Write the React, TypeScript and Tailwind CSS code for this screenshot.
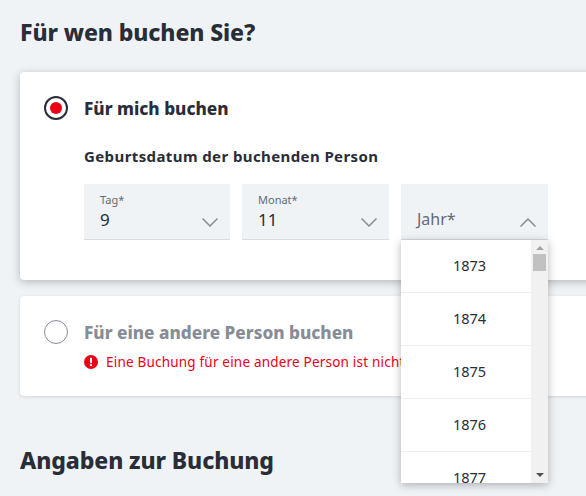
const font = { fontFamily: '"Noto Sans", sans-serif' };

function Chevron({ up }: { up?: boolean }) {
  return (
    <svg width="16" height="9" viewBox="0 0 16 9" fill="none" stroke="#878c96" strokeWidth="1.5" className="shrink-0">
      <path d={up ? "M0.5 8.5 L8 1 L15.5 8.5" : "M0.5 0.5 L8 8 L15.5 0.5"} />
    </svg>
  );
}

function DateField({ label, value, width, chevronRight }: { label: string; value: string; width: string; chevronRight: string }) {
  return (
    <div className={`${width} relative h-[56px] border-b border-[#d7dce1] bg-[#f0f3f5] pl-4 pt-[8px]`}>
      <div className="text-[11px] leading-[16px] text-[#646973]">{label}</div>
      <div className="mt-[1px] text-[17px] leading-[22px] text-[#282d37]">{value}</div>
      <div className={`absolute bottom-[12px] ${chevronRight}`}>
        <Chevron />
      </div>
    </div>
  );
}

function YearList() {
  const years = ["1873", "1874", "1875", "1876", "1877"];
  return (
    <div className="absolute left-0 top-full z-10 mt-[1px] flex h-[243px] w-[147px] overflow-hidden bg-white shadow-[0_2px_8px_rgba(40,45,55,0.35)]">
      <div className="flex-1 overflow-hidden">
        {years.map((y) => (
          <div key={y} className="h-[53px] border-b border-[#f0f0f0] pl-[7px] pt-[12px] text-center text-[14.5px] leading-[26px] text-[#282d37]">
            {y}
          </div>
        ))}
      </div>
      <div className="flex w-[17px] flex-col items-center bg-[#f1f1f1]">
        <div className="mt-[6px] h-0 w-0 border-x-[4px] border-b-[4px] border-x-transparent border-b-[#a3a3a3]" />
        <div className="mt-[4px] h-[17px] w-[13px] bg-[#c1c1c1]" />
        <div className="mt-auto mb-[6px] h-0 w-0 border-x-[4px] border-t-[4px] border-x-transparent border-t-[#505050]" />
      </div>
    </div>
  );
}

export default function App() {
  return (
    <div style={font} className="h-[496px] w-[586px] overflow-hidden bg-[#f0f3f5] pl-5 pt-[16px] text-[#282d37]">
      <h1 className="text-[23px] font-extrabold leading-[32px] tracking-[-0.1px]">Für wen buchen Sie?</h1>

      <div className="relative z-10 mt-[24px] h-[208px] w-[600px] rounded-[4px] bg-white pt-[24px] shadow-[0_2px_8px_rgba(40,45,55,0.3)]">
        <div className="flex h-6 items-center pl-6">
          <div className="flex h-6 w-6 items-center justify-center rounded-full border-2 border-[#282d37]">
            <div className="h-3 w-3 rounded-full bg-[#ec0016]" />
          </div>
          <div className="ml-[16px] mt-[2px] text-[17.2px] font-extrabold leading-6">Für mich buchen</div>
        </div>
        <div className="ml-[64px] mt-[24px]">
          <div className="text-[15px] font-bold leading-[24px] tracking-[0.4px]">Geburtsdatum der buchenden Person</div>
          <div className="mt-[16px] flex gap-3">
            <DateField label="Tag*" value="9" width="w-[146px]" chevronRight="right-[12px]" />
            <DateField label="Monat*" value="11" width="w-[147px]" chevronRight="right-[12px]" />
            <div className="relative h-[56px] w-[147px] border-b border-[#d7dce1] bg-[#f0f3f5] pl-4 pt-[24px]">
              <div className="text-[16px] leading-[22px] text-[#646973]">Jahr*</div>
              <div className="absolute bottom-[12px] right-[12px]">
                <Chevron up />
              </div>
              <YearList />
            </div>
          </div>
        </div>
      </div>

      <div className="mt-4 h-[100px] w-[600px] rounded-[4px] bg-white pl-6 pt-6 shadow-[0_1px_3px_rgba(40,45,55,0.15)]">
        <div className="flex h-6 items-center">
          <div className="h-6 w-6 rounded-full border border-[#878c96]" />
          <div className="ml-[16px] mt-[2px] text-[17.2px] font-extrabold leading-6 text-[#878c96]">Für eine andere Person buchen</div>
        </div>
        <div className="ml-[40px] mt-[8px] flex items-center gap-2">
          <svg width="14" height="14" viewBox="0 0 14 14">
            <circle cx="7" cy="7" r="7" fill="#ec0016" />
            <rect x="6" y="2.8" width="2" height="5.4" rx="0.6" fill="#fff" />
            <circle cx="7" cy="10.2" r="1.1" fill="#fff" />
          </svg>
          <div className="whitespace-nowrap text-[13.5px] leading-5 tracking-[0.2px] text-[#ec0016]">
            Eine Buchung für eine andere Person ist nicht möglich.
          </div>
        </div>
      </div>

      <h2 className="mt-[48px] text-[23px] font-extrabold leading-[32px] tracking-[-0.1px]">Angaben zur Buchung</h2>
    </div>
  );
}
